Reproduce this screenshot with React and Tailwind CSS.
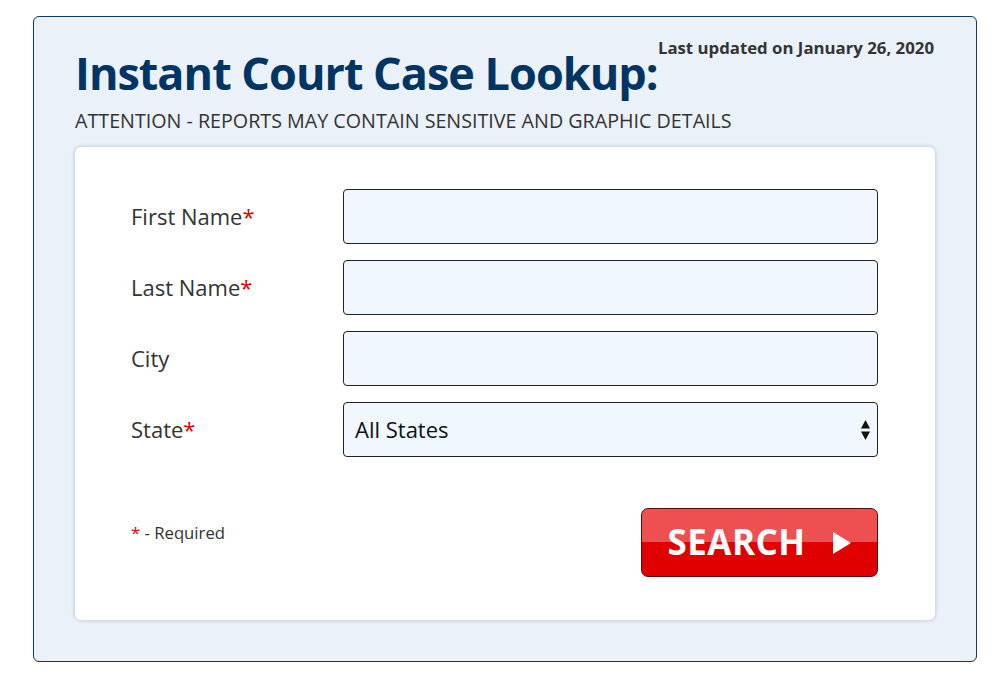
export default function App() {
  const font = { fontFamily: '"Open Sans", "Noto Sans", sans-serif' };
  const Row = ({ label, req, children }) => (
    <div className="flex items-center h-[55px]">
      <div className="w-[212px] text-[22px] text-[#333]">
        {label}
        {req && <span className="text-[#e00000]">*</span>}
      </div>
      <div className="flex-1">{children}</div>
    </div>
  );
  return (
    <div className="w-[1000px] h-[677px] bg-white pt-[16px] pl-[33px]" style={font}>
      <div className="relative w-[944px] h-[646px] border border-[#0b3a63] rounded-[6px] bg-[#eaf1f8] px-[41px]">
        <div className="absolute right-[42px] top-[18px] text-[16.8px] font-bold text-[#333] whitespace-nowrap">
          Last updated on January 26, 2020
        </div>
        <h1 className="text-[45px] leading-[1.2] font-bold text-[#003462] pt-[29px] tracking-[-1px] whitespace-nowrap">
          Instant Court Case Lookup:
        </h1>
        <div className="text-[19.7px] text-[#333] mt-[9px] leading-[24px]">
          ATTENTION - REPORTS MAY CONTAIN SENSITIVE AND GRAPHIC DETAILS
        </div>
        <div className="mt-[14px] bg-white rounded-[6px] shadow-[0_0_4px_rgba(0,40,80,0.25)] pt-[42px] pb-[43px] pl-[56px] pr-[57px]">
          <div className="flex flex-col gap-[16px]">
            <Row label="First Name" req>
              <input className="w-full h-[55px] rounded-[4px] border border-[#222] bg-[#f0f7fe] px-3 text-[22px]" />
            </Row>
            <Row label="Last Name" req>
              <input className="w-full h-[55px] rounded-[4px] border border-[#222] bg-[#f0f7fe] px-3 text-[22px]" />
            </Row>
            <Row label="City">
              <input className="w-full h-[55px] rounded-[4px] border border-[#222] bg-[#f0f7fe] px-3 text-[22px]" />
            </Row>
            <Row label="State" req>
              <div className="w-full h-[55px] rounded-[4px] border border-[#222] bg-[#f0f7fe] pl-[11px] pr-[7px] flex items-center justify-between text-[22px] text-[#111]">
                <span>All States</span>
                <svg width="9" height="20" viewBox="0 0 9 20">
                  <path d="M4.5 0 L9 8.5 L0 8.5 Z" fill="#111" />
                  <path d="M4.5 20 L9 11.5 L0 11.5 Z" fill="#111" />
                </svg>
              </div>
            </Row>
          </div>
          <div className="flex justify-between items-center mt-[51px]">
            <div className="text-[16.7px] text-[#333] -mt-[20px]">
              <span className="text-[#e00000]">*</span> - Required
            </div>
            <button className="relative w-[237px] h-[69px] rounded-[7px] border border-[#5a0a0a] overflow-hidden flex items-center justify-center bg-[linear-gradient(to_bottom,#ee5052_0%,#ee5052_50%,#e00000_50%,#e00000_100%)]">
              <span className="text-[35px] font-bold text-white tracking-[0.5px] mr-[26px]">SEARCH</span>
              <svg width="20" height="24" viewBox="0 0 20 24">
                <path d="M1 1 L19 12 L1 23 Z" fill="#fff" />
              </svg>
            </button>
          </div>
        </div>
      </div>
    </div>
  );
}
